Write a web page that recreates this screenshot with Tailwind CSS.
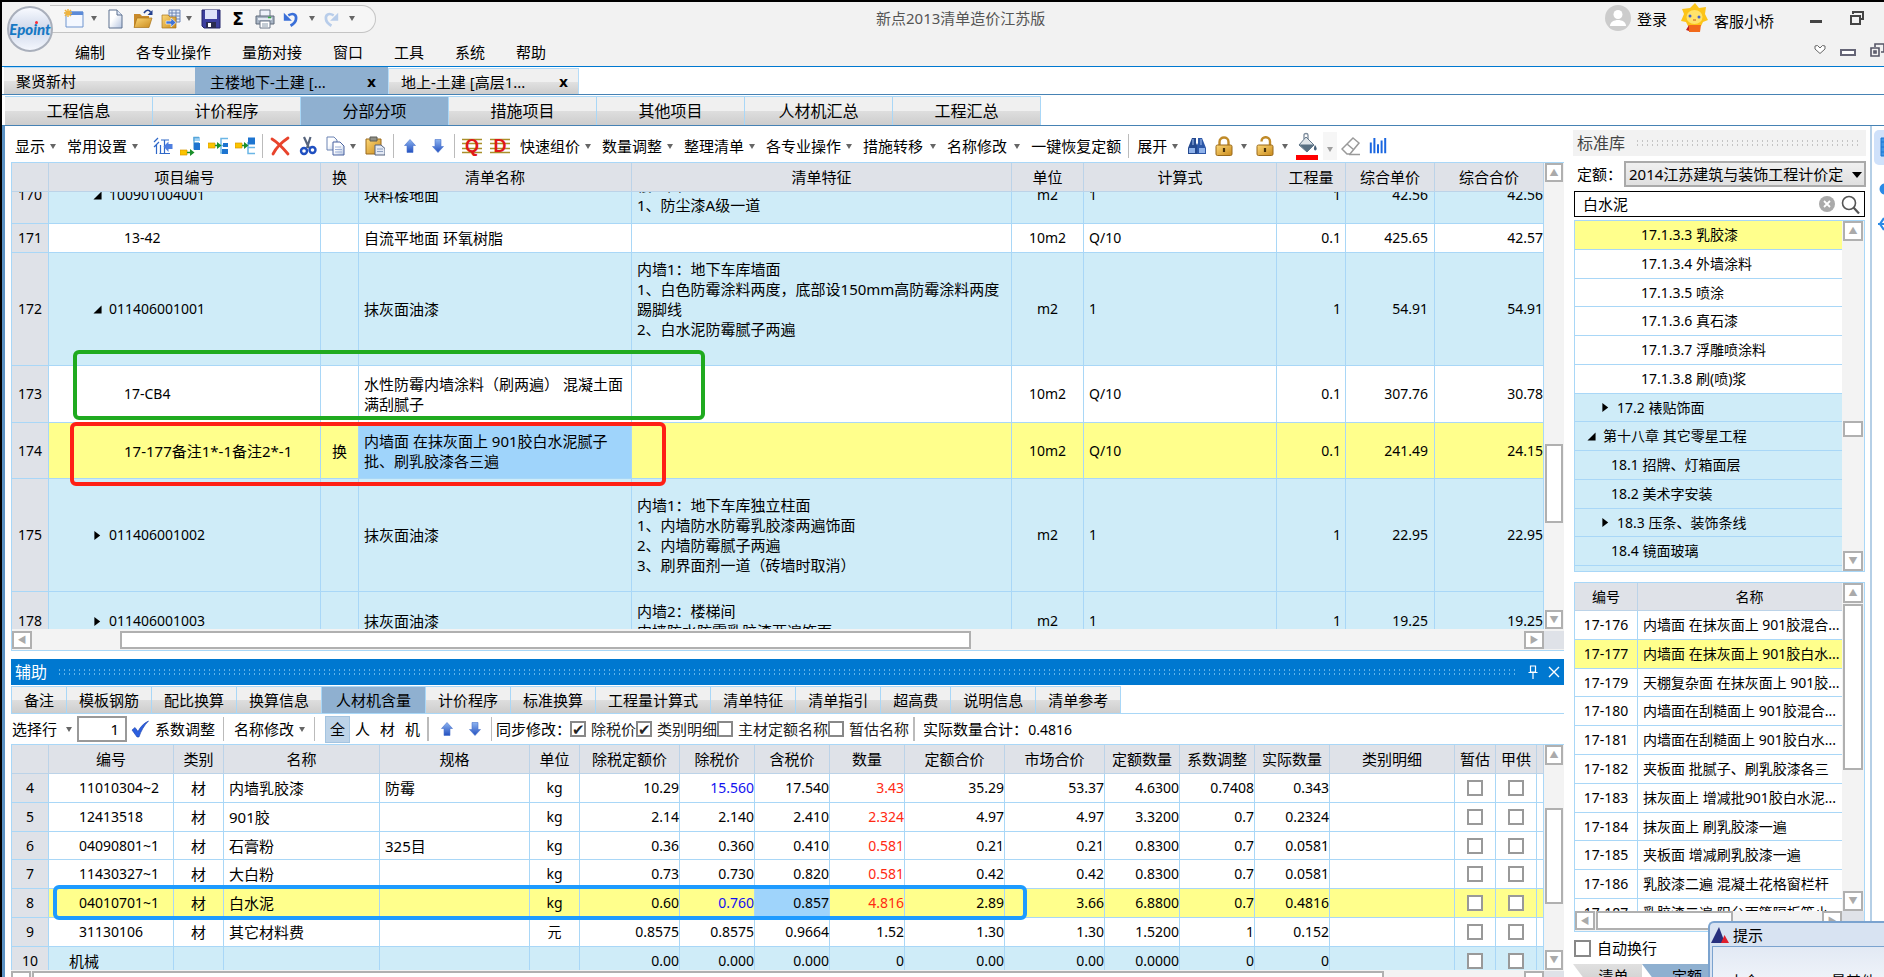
<!DOCTYPE html>
<html lang="zh-CN">
<head>
<meta charset="utf-8">
<title>新点2013清单造价江苏版</title>
<script src="https://cdn.jsdelivr.net/npm/@tailwindcss/browser@4"></script>
</head>
<body class="relative flex h-screen flex-col overflow-hidden border-t-2 border-l-2 border-black bg-white font-['Noto_Sans','Noto_Sans_CJK_SC',sans-serif] text-[15px] leading-5 text-black">

<svg class="absolute size-0" aria-hidden="true">
  <defs>
    <linearGradient id="gold" x1="0" y1="0" x2="1" y2="1"><stop offset="0" stop-color="#fdd878"/><stop offset="1" stop-color="#c98a1c"/></linearGradient>
    <linearGradient id="blue" x1="0" y1="0" x2="0" y2="1"><stop offset="0" stop-color="#8db4f0"/><stop offset="1" stop-color="#2350c0"/></linearGradient>
    <linearGradient id="page" x1="0" y1="0" x2="1" y2="1"><stop offset="0.4" stop-color="#fff"/><stop offset="1" stop-color="#b4c4e0"/></linearGradient>
    <symbol id="caret" viewBox="0 0 8 5"><path d="M1 0h6L4 5z" fill="#666"/></symbol>
    <symbol id="new" viewBox="0 0 20 20"><path d="M2 3h17v15H2z" fill="#f4f8ff" stroke="#6f95cf"/><path d="M2 2.500h17v3.500H2z" fill="#5b8ad8"/><path d="M4 0v8M0 4h8M1 1l6 6M7 1L1 7" stroke="#f0b43c" stroke-width="1.500"/></symbol>
    <symbol id="doc" viewBox="0 0 20 20"><path d="M4 1h8l5 5v13H4z" fill="url(#page)" stroke="#5d718f"/><path d="M12 1v5h5" fill="#dfe8f8" stroke="#5d718f"/></symbol>
    <symbol id="open" viewBox="0 0 20 20"><path d="M1 5h6l2 2h7v11H1z" fill="#c98a2a"/><path d="M4 9h15l-3 9.500H1z" fill="url(#gold)" stroke="#a8721a" stroke-width=".7"/><path d="M11 4c2-3.500 5-3.500 6.500-1" fill="none" stroke="#23408f" stroke-width="1.600"/><path d="M19.500 1v5h-5z" fill="#23408f"/></symbol>
    <symbol id="import" viewBox="0 0 20 20"><path d="M8 1h11v12H8z" fill="#e6eefb" stroke="#6d84b4"/><path d="M8 4h11M8 7h11M8 10h11M11 1v12M15 1v12" stroke="#6d84b4"/><path d="M1 6h6l2 2h6v11H1z" fill="url(#gold)" stroke="#a8721a" stroke-width=".7"/><path d="M5 12h5V9l5 4.500L10 18v-3H5z" fill="#3f74d8" stroke="#fff" stroke-width=".6"/></symbol>
    <symbol id="save" viewBox="0 0 20 20"><path d="M1 1h18v18H3l-2-2z" fill="#3c3f9e" stroke="#23256a"/><path d="M4 1h12v9H4z" fill="#dfe4fa"/><path d="M5 13h10v6H5z" fill="#2a2c50"/><path d="M7 14h3v4H7z" fill="#fff"/></symbol>
    <symbol id="print" viewBox="0 0 20 20"><path d="M5 1h10v7H5z" fill="#eef2fa" stroke="#6b7688"/><path d="M1 7h18v8H1z" fill="#a8b4c4" stroke="#5e6a7a"/><path d="M3 9h14v2H3z" fill="#e4eaf2"/><path d="M5 12h10v7H5z" fill="#fff" stroke="#6b7688"/><path d="M7 15h6M7 17h6" stroke="#8899aa"/><path d="M13 8.500h3" stroke="#2fae3b" stroke-width="1.500"/></symbol>
    <symbol id="undo" viewBox="0 0 20 20"><path d="M7 6c6-3.500 9.500-.5 8.500 4.500C15 14 12 16 9.500 17.500" fill="none" stroke="#3a6fd8" stroke-width="3"/><path d="M2 3v9h9z" fill="#3a6fd8"/></symbol>
    <symbol id="redo" viewBox="0 0 20 20"><path d="M13 6C7 2.500 3.500 5.500 4.500 10.500 5 14 8 16 10.500 17.500" fill="none" stroke="#b8cdea" stroke-width="3"/><path d="M18 3v9H9z" fill="#b8cdea"/></symbol>
    <symbol id="zheng" viewBox="0 0 20 20"><path d="M5 2L1 6M6 6L1 11M3.500 9v9M8 4h8M11.500 4v13M7.500 9v8M6.500 17.500H17M11.500 11H15" stroke="#2f68c8" stroke-width="1.200" fill="none"/><path d="M19.500 8v5h-4v3L10.500 10.500l5-5V8z" fill="#4f7fe0"/></symbol>
    <symbol id="ins1" viewBox="0 0 20 20"><path d="M13 1h7v4h-7zM14 8h6" fill="#9fd2f5"/><path d="M19 1.500h-5v12M14 7h5" fill="none" stroke="#56a5d8" stroke-width="1.300"/><path d="M14 7h6v7h-6z" fill="#1d74d0"/><path d="M0 14h7v5H0z" fill="#fbc400" stroke="#d89a00" stroke-width=".7"/><path d="M7 16.500h5" stroke="#1a8f2a" stroke-width="1.500"/><path d="M10 13l4.500 3.500L10 20z" fill="#1a8f2a"/></symbol>
    <symbol id="ins2" viewBox="0 0 20 20"><path d="M20 2.500h-7v14.500h7M13 9.500h7" fill="none" stroke="#6bb6e6" stroke-width="1.500"/><path d="M14 13h6v5h-6zM15 7h5v4h-5z" fill="#1d74d0"/><path d="M0 7h7v5H0z" fill="#fbc400" stroke="#d89a00" stroke-width=".7"/><path d="M7 9.500h4" stroke="#1a8f2a" stroke-width="1.500"/><path d="M9 6l4.500 3.500L9 13z" fill="#1a8f2a"/></symbol>
    <symbol id="ins3" viewBox="0 0 20 20"><path d="M20 17.500h-7V6M13 11.500h7" fill="none" stroke="#6bb6e6" stroke-width="1.500"/><path d="M13 1.500h7v7h-7z" fill="#1d74d0"/><path d="M0 7h7v5H0z" fill="#fbc400" stroke="#d89a00" stroke-width=".7"/><path d="M7 9.500h4" stroke="#1a8f2a" stroke-width="1.500"/><path d="M9 6l4.500 3.500L9 13z" fill="#1a8f2a"/></symbol>
    <symbol id="del" viewBox="0 0 20 20"><path d="M2 3c5 3 11 9 16 15M18 2C12 6 6 12 3 18" fill="none" stroke="#e8432c" stroke-width="2.800" stroke-linecap="round"/></symbol>
    <symbol id="cut" viewBox="0 0 20 20"><path d="M6 1l5 11M12.500 1L9 12" stroke="#56647c" stroke-width="2.200"/><circle cx="6" cy="15" r="3" fill="none" stroke="#1f4fc0" stroke-width="2.400"/><circle cx="14.500" cy="14" r="3" fill="none" stroke="#1f4fc0" stroke-width="2.400"/></symbol>
    <symbol id="copy" viewBox="0 0 20 20"><path d="M2 1h7l3 3v10H2z" fill="url(#page)" stroke="#6d84b4"/><path d="M8 6h7l4 4v9H8z" fill="url(#page)" stroke="#4a62a0"/><path d="M10 11h6M10 13.500h7M10 16h7" stroke="#9db0d8"/></symbol>
    <symbol id="paste" viewBox="0 0 20 20"><path d="M1 3h15v15H1z" fill="url(#gold)" stroke="#99691a"/><path d="M5 1h7v4H5z" fill="#8f8f86" stroke="#5c5c55"/><path d="M10 9h6l4 3.500V19H10z" fill="#e3e9f4" stroke="#55637f"/><path d="M12 13h6M12 15.500h6" stroke="#8ea0c0"/></symbol>
    <symbol id="up" viewBox="0 0 12 14"><path d="M6 .5l5.500 6H9v7H3v-7H.5z" fill="url(#blue)" stroke="#4a74cc" stroke-width=".6"/></symbol>
    <symbol id="down" viewBox="0 0 12 14"><path d="M6 13.500l5.500-6H9v-7H3v7H.5z" fill="url(#blue)" stroke="#4a74cc" stroke-width=".6"/></symbol>
    <symbol id="bino" viewBox="0 0 20 20"><path d="M5 2h4v5l1 2v9H1v-6z" fill="#24498f"/><path d="M15 2h-4v5l-1 2v9h9v-6z" fill="#2c57a8"/><path d="M2 12h6v5H2zM12 12h6v5h-6z" fill="#8fb2ea"/><path d="M6 3v6M14 3v6" stroke="#a8c4f0"/></symbol>
    <symbol id="lock" viewBox="0 0 20 20"><path d="M5.500 10V6c0-6 9-6 9 0v4" fill="none" stroke="#c08a28" stroke-width="2.400"/><rect x="2" y="9" width="16" height="10.500" rx="1.500" fill="url(#gold)" stroke="#99691a"/><path d="M10 12v4" stroke="#4a3208" stroke-width="2.200"/></symbol>
    <symbol id="unlock" viewBox="0 0 20 20"><path d="M6.500 5.500c0-6 8.500-5.500 8.500 0V10" fill="none" stroke="#c08a28" stroke-width="2.400"/><rect x="2" y="9" width="16" height="10.500" rx="1.500" fill="url(#gold)" stroke="#99691a"/><path d="M10 12v4" stroke="#4a3208" stroke-width="2.200"/></symbol>
    <symbol id="fill" viewBox="0 0 22 28"><path d="M8 7V3c0-2 4-2 4 0v4" fill="none" stroke="#7d8c9c" stroke-width="1.300"/><path d="M10 5l8 8-7 7-8-7z" fill="#dfe5ea" stroke="#64788a"/><path d="M3 12.500h15L11 20z" fill="#576f82"/><path d="M19 13c2 3 2.500 5 0 5.500-1.500-.5-1.500-2.500 0-5.500z" fill="#476078"/><path d="M0 23h22v5H0z" fill="#f00"/></symbol>
    <symbol id="erase" viewBox="0 0 20 20"><path d="M12 2l6 5-9 11H6l-5-5z" fill="#fff" stroke="#9a9a9a" stroke-width="1.500"/><path d="M6 8l6.500 5.500M8 18.500h11" stroke="#9a9a9a" stroke-width="1.500"/></symbol>
    <symbol id="bars" viewBox="0 0 20 20"><path d="M2 6v12M6 1v17M10 8v10M14 4v14M18 1v17" stroke="#1a66e0" stroke-width="2.200"/></symbol>
    <symbol id="mark" viewBox="0 0 20 18"><path d="M0 2.500h20M0 6.500h20M0 11.500h20M0 15.500h20" stroke="#a98f2a" stroke-width="1.600"/></symbol>
    <symbol id="check" viewBox="0 0 18 18"><path d="M1 10l3-2.500 3 4C9 7 13 3 17.500 1 13 5.500 10 11 8 17H6z" fill="#2b5fe0" stroke="#1c3fa8" stroke-width=".6"/></symbol>
    <symbol id="open-node" viewBox="0 0 10 10"><path d="M9.500.5v9H.5z"/></symbol>
    <symbol id="shut-node" viewBox="0 0 10 10"><path d="M1.500 0v10L8 5z"/></symbol>
  </defs>
</svg>

<!-- title bar and menu -->
<header class="relative h-[65px] shrink-0 border-b border-[#0078d0] bg-[#f2f2f2]">
  <div class="flex h-[31px] items-center justify-between">
    <div class="mt-0.5 ml-12 flex h-7 w-[326px] items-center rounded-r-full border border-l-0 border-[#c4c4c4] bg-[#f6f6f6] pl-3.5">
      <button aria-label="新建" class="w-5"><svg class="size-5"><use href="#new"/></svg></button>
      <button aria-label="新建选项" class="ml-1.5 w-2"><svg class="h-[5px] w-2"><use href="#caret"/></svg></button>
      <button aria-label="空白" class="ml-[7px] w-5"><svg class="size-5"><use href="#doc"/></svg></button>
      <button aria-label="打开" class="ml-2 w-5"><svg class="size-5"><use href="#open"/></svg></button>
      <button aria-label="导入" class="ml-2 w-5"><svg class="size-5"><use href="#import"/></svg></button>
      <button aria-label="导入选项" class="ml-1 w-2"><svg class="h-[5px] w-2"><use href="#caret"/></svg></button>
      <button aria-label="保存" class="ml-2 w-5"><svg class="size-5"><use href="#save"/></svg></button>
      <button aria-label="汇总" class="ml-[7px] w-5 text-center font-['DejaVu_Sans'] text-[17px] font-bold">Σ</button>
      <button aria-label="打印" class="ml-[7px] w-5"><svg class="size-5"><use href="#print"/></svg></button>
      <button aria-label="撤销" class="ml-[7px] w-5"><svg class="size-[18px]"><use href="#undo"/></svg></button>
      <button aria-label="撤销选项" class="ml-1.5 w-2"><svg class="h-[5px] w-2"><use href="#caret"/></svg></button>
      <button aria-label="重做" class="ml-1.5 w-5"><svg class="size-[18px]"><use href="#redo"/></svg></button>
      <button aria-label="重做选项" class="ml-1.5 w-2"><svg class="h-[5px] w-2"><use href="#caret"/></svg></button>
    </div>
    <div class="flex items-center">
      <svg class="size-[26px]" viewBox="0 0 26 26"><circle cx="13" cy="13" r="13" fill="#ccc"/><circle cx="13" cy="9.500" r="4.500" fill="#fff"/><path d="M5 21c0-8 16-8 16 0z" fill="#fff"/></svg>
      <a href="#" class="ml-1.5 pt-0.5">登录</a>
      <svg class="ml-3.5 h-[29px] w-[27px]" viewBox="0 0 27 29"><path d="M14 0l4 5 7-1-1 7 3 6-5 2-2 4H7l-2-4-5-1 3-7L1 6l8-1z" fill="#fcc419"/><ellipse cx="13.500" cy="14" rx="8" ry="7" fill="#ffe36b"/><circle cx="9" cy="13" r="1.500" fill="#4662c8"/><circle cx="18" cy="14" r="1.500" fill="#4662c8"/><path d="M12 17h3" stroke="#c8551a"/><path d="M8 22h12l-1 7H8z" fill="#f26a1b"/><path d="M8 22l-3 5 3 1z" fill="#c42020"/></svg>
      <a href="#" class="ml-1.5 pt-1.5">客服小桥</a>
      <button aria-label="最小化" class="mt-2 ml-9 h-[3px] w-3 bg-[#444]"></button>
      <button aria-label="还原" class="mr-5 ml-7"><svg class="size-3.5" viewBox="0 0 14 14"><path d="M3 3V1h10v7h-2M1 5h9v8H1z" fill="none" stroke="#444" stroke-width="2"/></svg></button>
    </div>
  </div>
  <h1 class="absolute top-1.5 left-[874px] text-[15px] text-[#555]">新点2013清单造价江苏版</h1>
  <div class="flex h-[33px] items-center justify-between">
    <nav class="flex gap-[31px] pt-1 pl-[73px]">
      <a href="#">编制</a><a href="#">各专业操作</a><a href="#">量筋对接</a><a href="#">窗口</a><a href="#">工具</a><a href="#">系统</a><a href="#">帮助</a>
    </nav>
    <div class="flex items-center gap-3.5">
      <svg class="h-[9px] w-3" viewBox="0 0 12 9"><path d="M1 1l2.500-.5L6 3 8.500.5 11 1v3L6 8.500 1 4z" fill="#fff" stroke="#666"/></svg>
      <button aria-label="窗口最小化" class="mt-1.5 h-[7px] w-4 border-2 border-[#667] bg-white"></button>
      <svg class="h-3.5 w-3.5" viewBox="0 0 14 14"><path d="M5 4V1h9v8h-3M1 5h8v8H1zM4 8h2v2H4z" fill="none" stroke="#556" stroke-width="1.600"/></svg>
    </div>
  </div>
  <!-- application logo -->
  <div class="absolute top-1 left-[5px] flex size-[46px] items-center justify-center rounded-full border-2 border-[#a9afbb] bg-linear-to-b from-[#f8faff] via-[#cfd8ea] to-[#f4f7fd] font-['Lato'] text-[15px] font-black text-[#1779c4] italic">Epoint<span class="absolute top-[13px] left-[26px] size-[3px] rounded-full bg-red-500"></span></div>
</header>

<!-- open documents -->
<nav class="flex h-7 shrink-0 items-end border-b border-[#4682b4] pl-0.5">
  <button class="h-[27px] w-[191px] border-t border-[#b5dcf8] bg-linear-to-b from-[#f0f0f0] from-50% via-[#e2e2e2] to-[#cdcdcd] pl-3 text-left">聚贤新村</button>
  <button class="flex h-[27px] w-[193px] items-center justify-between bg-[#8fb0d0] pt-0.5 pr-3 pl-[15px]"><span>主楼地下-土建 [...</span><b class="font-['DejaVu_Sans'] text-sm">x</b></button>
  <button class="flex h-[26px] w-[191px] items-center justify-between border border-b-0 border-[#b5dcf8] bg-linear-to-b from-[#f0f0f0] from-50% via-[#e2e2e2] to-[#cdcdcd] pr-2.5 pl-3"><span>地上-土建 [高层1...</span><b class="font-['DejaVu_Sans'] text-sm">x</b></button>
</nav>

<!-- project pages -->
<nav class="flex h-[31px] shrink-0 items-end border-b border-[#4682b4] pl-[3px] text-base [&>button]:h-[29px] [&>button]:w-[148px] [&>button]:border-t [&>button]:border-r [&>button]:border-[#a9d7f7] [&>button]:bg-linear-to-b [&>button]:from-[#f0f0f0] [&>button]:from-50% [&>button]:via-[#dedede] [&>button]:to-[#cdcdcd]">
  <button>工程信息</button><button>计价程序</button><button class="from-[#8fb0d0]! via-[#8fb0d0]! to-[#8fb0d0]!">分部分项</button><button>措施项目</button><button>其他项目</button><button>人材机汇总</button><button>工程汇总</button>
</nav>

<div class="flex min-h-0 flex-1 border-l-[3px] border-[#5b92c4] pl-1.5">
  <main class="flex min-w-0 flex-1 flex-col">
    <!-- tool bar -->
    <div class="flex h-9 shrink-0 items-center pt-1 pl-1 whitespace-nowrap">
      <button class="flex items-center gap-1">显示<svg class="h-[5px] w-2"><use href="#caret"/></svg></button>
      <button class="ml-2.5 flex items-center gap-1">常用设置<svg class="h-[5px] w-2"><use href="#caret"/></svg></button>
      <button aria-label="特征" class="ml-3.5 w-5"><svg class="size-5"><use href="#zheng"/></svg></button>
      <button aria-label="插入" class="ml-[7px] w-5"><svg class="size-5"><use href="#ins1"/></svg></button>
      <button aria-label="插入子项" class="ml-2 w-5"><svg class="size-5"><use href="#ins2"/></svg></button>
      <button aria-label="插入同级" class="ml-[7px] w-5"><svg class="size-5"><use href="#ins3"/></svg></button>
      <i class="ml-[7px] h-6 w-px bg-[#bbb]"></i>
      <button aria-label="删除" class="ml-[7px] w-5"><svg class="size-5"><use href="#del"/></svg></button>
      <button aria-label="剪切" class="ml-2 w-5"><svg class="size-5"><use href="#cut"/></svg></button>
      <button aria-label="复制" class="ml-[7px] w-5"><svg class="size-5"><use href="#copy"/></svg></button>
      <button aria-label="复制选项" class="ml-1 w-2"><svg class="h-[5px] w-2"><use href="#caret"/></svg></button>
      <button aria-label="粘贴" class="ml-2 w-5"><svg class="size-5"><use href="#paste"/></svg></button>
      <i class="ml-2 h-6 w-px bg-[#bbb]"></i>
      <button aria-label="上移" class="ml-2.5 w-3"><svg class="h-3.5 w-3"><use href="#up"/></svg></button>
      <button aria-label="下移" class="ml-4 w-3"><svg class="h-3.5 w-3"><use href="#down"/></svg></button>
      <i class="ml-2.5 h-6 w-px bg-[#bbb]"></i>
      <button class="relative ml-[7px] flex h-5 w-5 items-center justify-center font-['Liberation_Sans'] text-lg font-bold text-[#e01818]"><svg class="absolute top-px left-0 h-[18px] w-5"><use href="#mark"/></svg><span class="relative">Q</span></button>
      <button class="relative ml-2 flex h-5 w-5 items-center justify-center font-['Liberation_Sans'] text-lg font-bold text-[#e01818]"><svg class="absolute top-px left-0 h-[18px] w-5"><use href="#mark"/></svg><span class="relative">D</span></button>
      <button class="ml-2.5 flex items-center gap-1">快速组价<svg class="h-[5px] w-2"><use href="#caret"/></svg></button>
      <button class="ml-2.5 flex items-center gap-1">数量调整<svg class="h-[5px] w-2"><use href="#caret"/></svg></button>
      <button class="ml-2.5 flex items-center gap-1">整理清单<svg class="h-[5px] w-2"><use href="#caret"/></svg></button>
      <button class="ml-2.5 flex items-center gap-1">各专业操作<svg class="h-[5px] w-2"><use href="#caret"/></svg></button>
      <button class="ml-2.5 flex items-center gap-1.5">措施转移<svg class="h-[5px] w-2"><use href="#caret"/></svg></button>
      <button class="ml-2.5 flex items-center gap-1.5">名称修改<svg class="h-[5px] w-2"><use href="#caret"/></svg></button>
      <button class="ml-2.5">一键恢复定额</button>
      <i class="ml-[7px] h-6 w-px bg-[#bbb]"></i>
      <button class="ml-2 flex items-center gap-1">展开<svg class="h-[5px] w-2"><use href="#caret"/></svg></button>
      <button aria-label="查找" class="ml-2 w-5"><svg class="size-5"><use href="#bino"/></svg></button>
      <button aria-label="锁定" class="ml-[7px] w-5"><svg class="size-5"><use href="#lock"/></svg></button>
      <button aria-label="锁定选项" class="ml-1.5 w-2"><svg class="h-[5px] w-2"><use href="#caret"/></svg></button>
      <button aria-label="解锁" class="ml-[7px] w-5"><svg class="size-5"><use href="#unlock"/></svg></button>
      <button aria-label="解锁选项" class="ml-1.5 w-2"><svg class="h-[5px] w-2"><use href="#caret"/></svg></button>
      <button aria-label="填充颜色" class="ml-1.5 w-6"><svg class="h-7 w-6"><use href="#fill"/></svg></button>
      <button aria-label="填充选项" class="ml-1 flex h-7 w-3.5 items-end justify-center bg-[#f6f6f6] pb-2"><svg class="h-[5px] w-2 opacity-60"><use href="#caret"/></svg></button>
      <button aria-label="清除颜色" class="ml-1 w-5"><svg class="size-5"><use href="#erase"/></svg></button>
      <button aria-label="图表" class="ml-2 w-5"><svg class="size-[18px]"><use href="#bars"/></svg></button>
    </div>

    <!-- bill of quantities -->
    <section class="flex min-h-0 flex-1 flex-col border border-r-0 border-[#a9d7f7]">
      <div class="flex min-h-0 flex-1">
        <div id="billScroll" class="min-w-0 flex-1 overflow-hidden">
          <table class="w-full table-fixed border-separate border-spacing-0">
            <colgroup><col class="w-[37px]"><col class="w-[272px]"><col class="w-[38px]"><col class="w-[273px]"><col><col class="w-[72px]"><col class="w-[193px]"><col class="w-[69px]"><col class="w-[89px]"><col class="w-[109px]"></colgroup>
            <thead><tr class="[&>th]:sticky [&>th]:top-0 [&>th]:z-10 [&>th]:h-[29px] [&>th]:border-r [&>th]:border-b [&>th]:border-[#bcd3e8] [&>th]:bg-[#dfe2e8] [&>th]:p-0 [&>th]:font-normal">
              <th></th><th>项目编号</th><th>换</th><th>清单名称</th><th>清单特征</th><th>单位</th><th>计算式</th><th>工程量</th><th>综合单价</th><th>综合合价</th></tr></thead>
            <tbody id="billRows"></tbody>
          </table>
        </div>
        <div class="flex w-5 shrink-0 flex-col bg-[#f3f3f3] px-px">
          <button aria-label="向上" class="flex h-[19px] items-center justify-center border-2 border-[#b0b0b0] bg-white text-[9px] text-[#aaa]">▲</button>
          <div class="mt-[262px] h-[79px] border-2 border-[#b0b0b0] bg-white"></div>
          <button aria-label="向下" class="mt-auto flex h-[19px] items-center justify-center border-2 border-[#b0b0b0] bg-white text-[9px] text-[#aaa]">▼</button>
        </div>
      </div>
      <div class="flex h-[21px] shrink-0 bg-[#f3f3f3] pt-0.5 pb-px">
        <button aria-label="向左" class="flex w-5 items-center justify-center border-2 border-[#b0b0b0] bg-white text-[9px] text-[#aaa]">◀</button>
        <div class="ml-[88px] w-[851px] border-2 border-[#b0b0b0] bg-white"></div>
        <button aria-label="向右" class="ml-auto flex w-5 items-center justify-center border-2 border-[#b0b0b0] bg-white text-[9px] text-[#aaa]">▶</button>
        <div class="w-5 bg-[#dfe2e8]"></div>
      </div>
    </section>

    <!-- auxiliary pane -->
    <section class="mt-2 flex h-[318px] shrink-0 flex-col">
      <div class="flex h-[26px] shrink-0 items-center gap-2.5 bg-[#0078d0] pr-1 pl-1 text-base text-white">
        <h2>辅助</h2>
        <div class="h-2 flex-1 bg-[radial-gradient(#5fb4ea_1px,transparent_1px)] [background-size:5px_4px]"></div>
        <svg class="h-3.5 w-2.5" viewBox="0 0 10 14"><path d="M2.500 1h5v6h-5zM.5 7.500h9M5 8v6" fill="none" stroke="#fff" stroke-width="1.200"/></svg>
        <button aria-label="关闭"><svg class="size-3" viewBox="0 0 12 12"><path d="M1 1l10 10M11 1L1 11" stroke="#fff" stroke-width="1.400"/></svg></button>
      </div>
      <nav class="flex h-[29px] shrink-0 items-end border-b border-[#a9d7f7] [&>button]:h-[27px] [&>button]:border-t [&>button]:border-r [&>button]:border-[#a9d7f7] [&>button]:bg-linear-to-b [&>button]:from-[#f0f0f0] [&>button]:from-50% [&>button]:via-[#dedede] [&>button]:to-[#cdcdcd] [&>button]:px-3">
        <button class="border-l">备注</button><button>模板钢筋</button><button>配比换算</button><button>换算信息</button><button class="px-3.5! from-[#8fb0d0]! via-[#8fb0d0]! to-[#8fb0d0]!">人材机含量</button><button>计价程序</button><button>标准换算</button><button>工程量计算式</button><button>清单特征</button><button>清单指引</button><button>超高费</button><button>说明信息</button><button>清单参考</button>
      </nav>
      <div class="flex h-[30px] shrink-0 items-center pl-px whitespace-nowrap">
        <label for="rowNo">选择行</label>
        <svg class="ml-2 h-[5px] w-2"><use href="#caret"/></svg>
        <input id="rowNo" value="1" class="ml-1 h-[26px] w-[50px] border-2 border-[#999] bg-white pr-1.5 text-right">
        <button class="ml-1 flex items-center gap-1.5"><svg class="size-[18px]"><use href="#check"/></svg>系数调整</button>
        <i class="ml-2 h-6 w-px bg-[#bbb]"></i>
        <button class="ml-2.5 flex items-center gap-1">名称修改<svg class="h-[5px] w-2"><use href="#caret"/></svg></button>
        <i class="ml-2 h-6 w-px bg-[#bbb]"></i>
        <button class="ml-2.5 h-[27px] w-[25px] border border-[#a4c4e0] bg-[#bdd3e8]">全</button>
        <button class="w-[25px]">人</button><button class="w-[25px]">材</button><button class="w-[25px]">机</button>
        <i class="ml-0.5 h-6 w-0.5 bg-[#bbb]"></i>
        <button aria-label="上移" class="ml-3 w-3"><svg class="h-3.5 w-3"><use href="#up"/></svg></button>
        <button aria-label="下移" class="ml-4 w-3"><svg class="h-3.5 w-3"><use href="#down"/></svg></button>
        <i class="ml-2.5 h-6 w-px bg-[#bbb]"></i>
        <span class="ml-1 w-[74px]">同步修改：</span>
        <span class="flex items-center [&_input]:mr-[5px] [&_input]:flex [&_input]:size-4 [&_input]:shrink-0 [&_input]:appearance-none [&_input]:items-center [&_input]:justify-center [&_input]:border-2 [&_input]:border-[#888] [&_input]:bg-white [&_input]:leading-none [&_input]:checked:before:content-['✔'] [&_label]:flex [&_label]:items-center [&_label]:text-[#222]">
          <label><input type="checkbox" checked>除税价</label>
          <label><input type="checkbox" checked>类别明细</label>
          <label><input type="checkbox">主材定额名称</label>
          <label><input type="checkbox">暂估名称</label>
        </span>
        <i class="ml-1 h-6 w-0.5 bg-[#bbb]"></i>
        <span class="ml-2">实际数量合计：<span class="text-sm">0.4816</span></span>
      </div>
      <div class="flex min-h-0 flex-1 border-t border-l border-[#a9d7f7]">
        <div class="min-w-0 flex-1 overflow-hidden">
          <table class="w-full table-fixed border-separate border-spacing-0">
            <colgroup><col class="w-[37px]"><col class="w-[125px]"><col class="w-[50px]"><col class="w-[156px]"><col class="w-[150px]"><col class="w-[50px]"><col class="w-[100px]"><col class="w-[75px]"><col class="w-[75px]"><col class="w-[75px]"><col class="w-[100px]"><col class="w-[100px]"><col class="w-[75px]"><col class="w-[75px]"><col class="w-[75px]"><col><col class="w-[41px]"><col class="w-[41px]"><col class="w-[7px]"></colgroup>
            <thead><tr class="[&>th]:h-[29px] [&>th]:border-r [&>th]:border-b [&>th]:border-[#bcd3e8] [&>th]:bg-[#dfe2e8] [&>th]:p-0 [&>th]:font-normal [&>th]:whitespace-nowrap">
              <th></th><th>编号</th><th>类别</th><th>名称</th><th>规格</th><th>单位</th><th>除税定额价</th><th>除税价</th><th>含税价</th><th>数量</th><th>定额合价</th><th>市场合价</th><th>定额数量</th><th>系数调整</th><th>实际数量</th><th>类别明细</th><th>暂估</th><th>甲供</th><th></th></tr></thead>
            <tbody id="resRows"></tbody>
          </table>
        </div>
        <div class="flex w-5 shrink-0 flex-col bg-[#f3f3f3] px-px">
          <button aria-label="向上" class="flex h-5 items-center justify-center border-2 border-[#b0b0b0] bg-white text-[9px] text-[#aaa]">▲</button>
          <div class="mt-[43px] h-24 border-2 border-[#b0b0b0] bg-white"></div>
          <button aria-label="向下" class="mt-auto flex h-5 items-center justify-center border-2 border-[#b0b0b0] bg-white text-[9px] text-[#aaa]">▼</button>
        </div>
      </div>
      <div class="flex h-[7px] shrink-0 bg-[#f3f3f3] pt-px">
        <div class="w-5 border-2 border-b-0 border-[#b0b0b0] bg-white"></div>
        <div class="ml-px w-[1352px] border-2 border-b-0 border-[#b0b0b0] bg-white"></div>
        <div class="ml-auto w-5 border-2 border-b-0 border-[#b0b0b0] bg-white"></div>
        <div class="w-5 bg-[#dfe2e8]"></div>
      </div>
    </section>
  </main>

  <!-- standard library -->
  <aside class="ml-[9px] flex w-[293px] shrink-0 flex-col pt-1">
    <div class="flex h-[26px] shrink-0 items-center gap-2.5 bg-[#f2f2f2] px-1 text-base text-[#444]">
      <h2>标准库</h2>
      <div class="h-2 flex-1 bg-[radial-gradient(#c4c4c4_1px,transparent_1px)] [background-size:5px_4px]"></div>
    </div>
    <div class="mt-1 flex h-[27px] shrink-0 items-center">
      <label for="quota" class="w-[51px] pl-1">定额：</label>
      <div class="relative h-[26px] min-w-0 flex-1">
        <select id="quota" class="h-full w-full appearance-none border-2 border-[#aaa] bg-linear-to-b from-[#f0f0f0] to-[#e0e0e0] pl-[3px] whitespace-nowrap"><option>2014江苏建筑与装饰工程计价定</option></select>
        <svg class="pointer-events-none absolute top-[11px] right-1 h-1.5 w-2.5" viewBox="0 0 10 6"><path d="M0 0h10L5 6z"/></svg>
      </div>
    </div>
    <div class="mt-1 mr-px ml-px flex h-[26px] shrink-0 items-center border border-black pr-1 pl-2 outline-1 -outline-offset-1 outline-black">
      <input aria-label="搜索" value="白水泥" class="min-w-0 flex-1 bg-transparent outline-none">
      <button aria-label="清空"><svg class="size-4" viewBox="0 0 16 16"><circle cx="8" cy="8" r="8" fill="#aaa"/><path d="M5 5l6 6M11 5l-6 6" stroke="#fff" stroke-width="1.800"/></svg></button>
      <button aria-label="查询" class="ml-1.5"><svg class="size-[19px]" viewBox="0 0 19 19"><circle cx="8" cy="8" r="6.500" fill="none" stroke="#555" stroke-width="1.600"/><path d="M12.500 12.500l5.500 6" stroke="#555" stroke-width="2.200"/></svg></button>
    </div>
    <div class="mx-px mt-[3px] flex h-[352px] shrink-0 border border-[#a9d7f7]">
      <ul id="tree" class="min-w-0 flex-1 overflow-hidden text-sm"></ul>
      <div class="flex w-[22px] shrink-0 flex-col bg-[#f3f3f3] px-px">
        <button aria-label="向上" class="flex h-5 items-center justify-center border-2 border-[#b0b0b0] bg-white text-[9px] text-[#aaa]">▲</button>
        <div class="mt-[180px] h-4 border-2 border-[#b0b0b0] bg-white"></div>
        <button aria-label="向下" class="mt-auto flex h-5 items-center justify-center border-2 border-[#b0b0b0] bg-white text-[9px] text-[#aaa]">▼</button>
      </div>
    </div>
    <div class="mx-px mt-2.5 flex min-h-0 flex-1 flex-col border border-[#a9d7f7]">
      <div class="flex min-h-0 flex-1">
        <div class="min-w-0 flex-1 overflow-hidden">
          <table class="w-[calc(100%+20px)] table-fixed border-separate border-spacing-0 text-sm">
            <colgroup><col class="w-[63px]"><col></colgroup>
            <thead><tr class="[&>th]:h-7 [&>th]:border-r [&>th]:border-b [&>th]:border-[#bcd3e8] [&>th]:bg-[#dfe2e8] [&>th]:p-0 [&>th]:font-normal"><th>编号</th><th>名称</th></tr></thead>
            <tbody id="quotaRows"></tbody>
          </table>
        </div>
        <div class="flex w-[22px] shrink-0 flex-col bg-[#f3f3f3] px-px">
          <button aria-label="向上" class="flex h-5 items-center justify-center border-2 border-[#b0b0b0] bg-white text-[9px] text-[#aaa]">▲</button>
          <div class="mt-px h-[166px] border-2 border-[#b0b0b0] bg-white"></div>
          <button aria-label="向下" class="mt-auto flex h-5 items-center justify-center border-2 border-[#b0b0b0] bg-white text-[9px] text-[#aaa]">▼</button>
        </div>
      </div>
      <div class="flex h-5 shrink-0 bg-[#f3f3f3] pb-px">
        <button aria-label="向左" class="flex w-5 items-center justify-center border-2 border-[#b0b0b0] bg-white text-[9px] text-[#aaa]">◀</button>
        <div class="ml-px w-[137px] border-2 border-[#b0b0b0] bg-white"></div>
        <button aria-label="向右" class="ml-auto flex w-5 items-center justify-center border-2 border-[#b0b0b0] bg-white text-[9px] text-[#aaa]">▶</button>
        <div class="w-[22px] bg-[#dfe2e8]"></div>
      </div>
    </div>
    <label class="mt-1.5 ml-px flex h-5 shrink-0 items-center gap-1.5"><input type="checkbox" class="size-[17px] appearance-none border-2 border-[#888] bg-white">自动换行</label>
    <div class="mt-1.5 flex h-[13px] shrink-0 overflow-hidden">
      <button class="h-6 w-[69px] bg-linear-to-b from-[#e0e0e0] to-[#cdcdcd] pl-3 [clip-path:polygon(0_0,100%_0,100%_100%,18px_100%)]">清单</button>
      <button class="h-6 w-[90px] bg-[#8fb0d0] [clip-path:polygon(0_0,100%_0,100%_100%,18px_100%)]">定额</button>
    </div>
  </aside>

  <!-- collapsed side panels -->
  <div class="ml-[4px] w-[14px] shrink-0 overflow-hidden border-l-2 border-[#b5cfe6] pt-1 pl-0.5">
    <svg class="h-28 w-2.5" viewBox="0 0 10 112"><rect x="0" y="0" width="24" height="35" rx="5" fill="#cfe1fa"/><path d="M7 8h8v18H7zM7 12h8M7 17h8M7 22h8" fill="#3f97e8" stroke="#1d74d0"/><circle cx="11" cy="59" r="5.500" fill="#2a8ae6"/><path d="M4 94h6M10 88l-4 6 4 6" stroke="#2a8ae6" stroke-width="2.200" fill="none"/></svg>
  </div>
</div>

<!-- notification window -->
<div class="absolute right-0 bottom-0 flex h-14 w-44 flex-col overflow-hidden rounded-tl-md border-t-2 border-l-2 border-[#7ba3cf] bg-[#d8e3f2]" role="dialog" aria-label="提示">
  <div class="flex h-[23px] shrink-0 items-center gap-1 pl-px"><svg class="h-4 w-[18px]" viewBox="0 0 18 16"><path d="M8 0l6 16H0z" fill="#28307e"/><path d="M13.500 8l4.500 8h-8z" fill="#e01f2d"/></svg>提示</div>
  <div class="ml-0.5 flex-1 border-t border-l border-[#7ba3cf] bg-linear-to-b from-[#e2e9f4] to-[#f4f7fb] pt-6 pl-4 whitespace-pre">本企<span class="ml-[72px]">最其他</span></div>
</div>

<!-- review marks drawn over the grids -->
<div class="pointer-events-none absolute top-[348px] left-[71px] h-[70px] w-[632px] rounded-md border-4 border-[#1faa1f]"></div>
<div class="pointer-events-none absolute top-[420px] left-[68px] h-16 w-[596px] rounded-md border-4 border-[#ff2015]"></div>
<div class="pointer-events-none absolute top-[883px] left-[51px] h-[35px] w-[974px] rounded-md border-4 border-[#1e9bff]"></div>

<script>
const paint = { b: 'bg-[#cfecf8]', w: 'bg-white', y: 'bg-[#ffff8c]' };
const cell = 'border-r border-b border-[#a9d7f7] p-0 ';
const num = cell + 'text-right text-sm ';

// [row, colour, height class, node, code, swap, name, feature, unit, formula, qty, price, total]
const bill = [
  [170,'b','h-[57px]','open','100901004001','','块料楼地面','楼地面<br>1、防尘漆A级一道','m2','1','1','42.56','42.56'],
  [171,'w','h-[29px]','','13-42','','自流平地面 环氧树脂','','10m2','Q/10','0.1','425.65','42.57'],
  [172,'b','h-[113px]','open','011406001001','','抹灰面油漆','内墙1：地下车库墙面<br>1、白色防霉涂料两度，底部设150mm高防霉涂料两度<br>踢脚线<br>2、白水泥防霉腻子两遍<br>&nbsp;','m2','1','1','54.91','54.91'],
  [173,'w','h-[57px]','','17-CB4','','水性防霉内墙涂料（刷两遍） 混凝土面<br>满刮腻子','','10m2','Q/10','0.1','307.76','30.78'],
  [174,'y','h-14','','17-177备注1*-1备注2*-1','换','内墙面 在抹灰面上 901胶白水泥腻子<br>批、刷乳胶漆各三遍','','10m2','Q/10','0.1','241.49','24.15'],
  [175,'b','h-[113px]','shut','011406001002','','抹灰面油漆','内墙1：地下车库独立柱面<br>1、内墙防水防霉乳胶漆两遍饰面<br>2、内墙防霉腻子两遍<br>3、刷界面剂一道（砖墙时取消）','m2','1','1','22.95','22.95'],
  [178,'b','h-[59px]','shut','011406001003','','抹灰面油漆','内墙2：楼梯间<br>内墙防水防霉乳胶漆两遍饰面','m2','1','1','19.25','19.25'],
];
billRows.innerHTML = bill.map(r => {
  const node = r[3] ? `<svg class="mr-[7px] size-[9px]"><use href="#${r[3]}-node"/></svg>` : '';
  const size = /[一-龥]/.test(r[4]) ? '' : 'text-sm ';
  return `<tr class="${paint[r[1]]}">
    <td class="${cell}${r[2]} bg-[#dfe2e8] text-center text-sm">${r[0]}</td>
    <td class="${cell}"><div class="flex items-center ${size}${r[3] ? 'pl-11' : 'pl-[75px]'}">${node}${r[4]}</div></td>
    <td class="${cell}text-center">${r[5]}</td>
    <td class="${cell}pl-[5px] whitespace-nowrap ${r[1] === 'y' ? 'bg-[#9fd4fb]' : ''}">${r[6]}</td>
    <td class="${cell}pl-[5px] whitespace-nowrap">${r[7]}</td>
    <td class="${cell}text-center text-sm">${r[8]}</td>
    <td class="${cell}pl-[5px] text-sm">${r[9]}</td>
    <td class="${num}pr-1">${r[10]}</td><td class="${num}pr-1.5">${r[11]}</td><td class="${num}pr-px">${r[12]}</td></tr>`;
}).join('');
billScroll.scrollTop = 25;

const res = [
  [4,'w','11010304~2','材','内墙乳胶漆','防霉','kg','10.29','15.560','17.540','3.43','35.29','53.37','4.6300','0.7408','0.343'],
  [5,'w','12413518','材','901胶','','kg','2.14','2.140','2.410','2.324','4.97','4.97','3.3200','0.7','0.2324'],
  [6,'w','04090801~1','材','石膏粉','325目','kg','0.36','0.360','0.410','0.581','0.21','0.21','0.8300','0.7','0.0581'],
  [7,'w','11430327~1','材','大白粉','','kg','0.73','0.730','0.820','0.581','0.42','0.42','0.8300','0.7','0.0581'],
  [8,'y','04010701~1','材','白水泥','','kg','0.60','0.760','0.857','4.816','2.89','3.66','6.8800','0.7','0.4816'],
  [9,'w','31130106','材','其它材料费','','元','0.8575','0.8575','0.9664','1.52','1.30','1.30','1.5200','1','0.152'],
  [10,'b','机械','','','','','0.00','0.000','0.000','0','0.00','0.00','0.0000','0','0'],
];
const box = t => `<td class="${cell}text-center"><input type="checkbox" aria-label="${t}" class="block size-4 appearance-none border-2 border-[#999] bg-white mx-auto"></td>`;
resRows.innerHTML = res.map(r => `<tr class="${paint[r[1]]} [&>td]:h-[29px] [&:nth-child(5n+3)>td]:h-7">
  <td class="${cell}bg-[#dfe2e8] text-center text-sm">${r[0]}</td>
  <td class="${cell}${r[1] === 'b' ? 'pl-5' : 'pl-[30px] text-sm'}">${r[2]}</td>
  <td class="${cell}text-center">${r[3]}</td>
  <td class="${cell}pl-[5px]">${r[4]}</td><td class="${cell}pl-[5px]">${r[5]}</td>
  <td class="${cell}text-center text-sm">${r[6]}</td>` +
  r.slice(7).map((v, i) => {
    const ink = i === 1 && (r[0] === 4 || r[0] === 8) ? 'text-[#1212f0]' : i === 3 && r[0] < 9 ? 'text-[#ff2a12]' : '';
    const pick = i === 2 && r[0] === 8 ? 'bg-[#9fd4fb]' : '';
    return `<td class="${num}pr-[5px] ${ink} ${pick}">${v}</td>`;
  }).join('') + `<td class="${cell}"></td>${box('暂估')}${box('甲供')}<td class="${cell}"></td></tr>`).join('');

const nodes = [
  ['y','pl-[66px]','','17.1.3.3 乳胶漆'],['w','pl-[66px]','','17.1.3.4 外墙涂料'],['w','pl-[66px]','','17.1.3.5 喷涂'],
  ['w','pl-[66px]','','17.1.3.6 真石漆'],['w','pl-[66px]','','17.1.3.7 浮雕喷涂料'],['w','pl-[66px]','','17.1.3.8 刷(喷)浆'],
  ['b','pl-[26px]','shut','17.2 裱贴饰面'],['b','pl-3','open','第十八章 其它零星工程'],['b','pl-9','','18.1 招牌、灯箱面层'],
  ['b','pl-9','','18.2 美术字安装'],['b','pl-[26px]','shut','18.3 压条、装饰条线'],['b','pl-9','','18.4 镜面玻璃'],['b','pl-9','',''],
];
tree.innerHTML = nodes.map(n => `<li class="flex h-[29px] items-center border-b border-[#a9d7f7] whitespace-pre [&:nth-child(4n+3)]:h-7 ${paint[n[0]]} ${n[1]}">${
  n[2] ? `<svg class="mr-[7px] size-[9px]"><use href="#${n[2]}-node"/></svg>` : ''}${n[3]}</li>`).join('');

const quotas = [
  ['17-176','内墙面 在抹灰面上 901胶混合...'],['17-177','内墙面 在抹灰面上 901胶白水...'],['17-179','天棚复杂面 在抹灰面上 901胶...'],
  ['17-180','内墙面在刮糙面上 901胶混合...'],['17-181','内墙面在刮糙面上 901胶白水...'],['17-182','夹板面 批腻子、刷乳胶漆各三'],
  ['17-183','抹灰面上 增减批901胶白水泥...'],['17-184','抹灰面上 刷乳胶漆一遍'],['17-185','夹板面 增减刷乳胶漆一遍'],
  ['17-186','乳胶漆二遍 混凝土花格窗栏杆'],['17-187','乳胶漆二遍 阳台雨篷隔板等小'],
];
quotaRows.innerHTML = quotas.map((q, i) => `<tr class="${i === 1 ? paint.y : paint.w} [&>td]:h-[29px] [&:nth-child(5n+3)>td]:h-7">
  <td class="${cell}text-center">${q[0]}</td><td class="${cell}overflow-hidden pl-[5px] whitespace-nowrap">${q[1]}</td></tr>`).join('');
</script>
</body>
</html>
